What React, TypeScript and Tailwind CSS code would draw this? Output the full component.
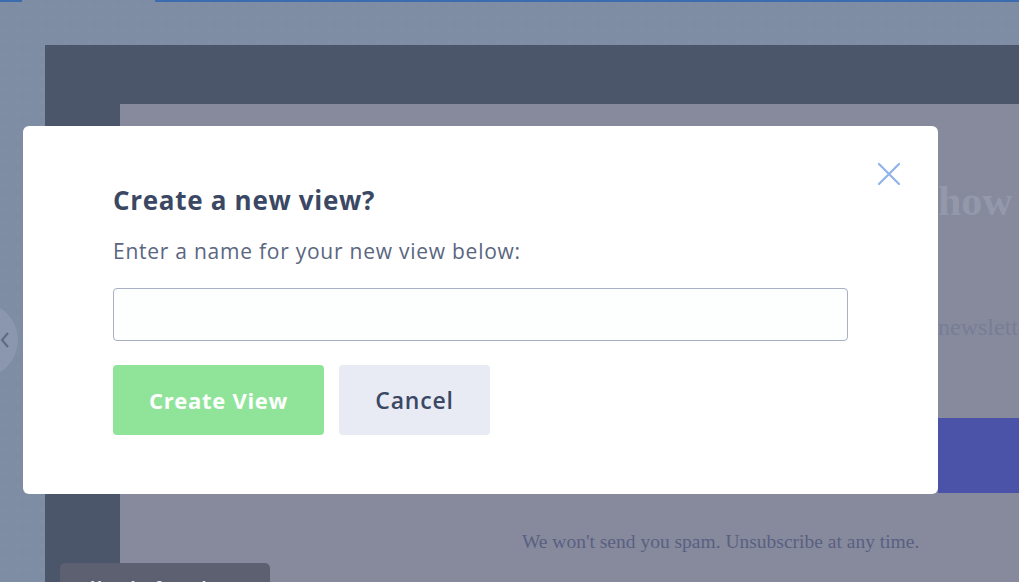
import React from "react";

const sans = { fontFamily: "'Open Sans', Lato, sans-serif" };

const CloseIcon = () => (
  <svg width="24" height="24" viewBox="0 0 24 24" fill="none">
    <path d="M2 2L22 22M22 2L2 22" stroke="#8fb3ea" strokeWidth="2.2" strokeLinecap="round" />
  </svg>
);

const Backdrop = () => (
  <div className="w-[1019px] h-[582px] flex flex-col bg-[#7e8ca4] bg-[radial-gradient(#8391a8_1px,transparent_1px)] bg-[size:12px_12px]">
    <div className="flex h-[2px] shrink-0">
      <div className="w-[22px] bg-[#3d6cae]" />
      <div className="w-[133px] bg-[#7e8ca4]" />
      <div className="flex-1 bg-[#3d6cae]" />
    </div>
    <div className="flex-1 flex flex-col pl-[45px] pt-[43px]">
      <div className="flex-1 flex flex-col bg-[#4b566b] pl-[75px] pt-[59px]">
        <div
          className="flex-1 flex flex-col bg-[#868a9c] text-[#9398ab]"
          style={{ fontFamily: "'Liberation Serif', serif" }}
        >
          <div className="ml-[818px] mt-[75px] text-[42px] leading-[44px] font-bold whitespace-nowrap">how to</div>
          <div className="ml-[818px] mt-[90px] text-[24px] leading-[28px] text-[#787d97] whitespace-nowrap">newsletter</div>
          <div className="ml-[818px] mt-[77px] h-[75px] bg-[#4a53a7]" />
          <div className="ml-[402px] mt-[37px] text-[19.5px] leading-[24px] text-[#5a5f82] whitespace-nowrap">
            We won't send you spam. Unsubscribe at any time.
          </div>
        </div>
      </div>
    </div>
  </div>
);

export default function App() {
  return (
    <div className="relative w-[1019px] h-[582px] overflow-hidden" style={sans}>
      <Backdrop />

      {/* carousel arrow */}
      <div className="absolute left-[-58px] top-[302px] w-[76px] h-[76px] rounded-full bg-[#8a97ae] flex items-center justify-end pr-[8px]">
        <svg width="10" height="16" viewBox="0 0 10 16" fill="none">
          <path d="M8 1L2 8L8 15" stroke="#5d6a85" strokeWidth="2" />
        </svg>
      </div>

      {/* bottom tag */}
      <div className="absolute left-[60px] top-[563px] w-[210px] h-[30px] rounded-t-[5px] bg-[#5d6070] px-[30px] pt-[12px] text-[16px] font-bold text-[#e5e7ee] whitespace-nowrap">
        Use the free plan
      </div>

      {/* modal */}
      <div className="absolute left-[23px] top-[126px] w-[915px] h-[368px] bg-white rounded-[6px] flex flex-col pl-[90px] pr-[90px] pt-[56px]">
        <button className="absolute right-[37px] top-[36px]">
          <CloseIcon />
        </button>
        <h2 className="text-[26px] leading-[36px] font-bold tracking-[0.7px] text-[#3b4863]">Create a new view?</h2>
        <p className="mt-[19px] text-[21px] leading-[28px] tracking-[0.75px] text-[#5a6680]">
          Enter a name for your new view below:
        </p>
        <input className="mt-[23px] w-[735px] h-[53px] rounded-[4px] border border-[#a9b0c4] bg-[#fdfefe] outline-none" />
        <div className="mt-[24px] flex gap-[15px]">
          <button className="w-[211px] h-[70px] rounded-[4px] bg-[#90e49a] text-white text-[22px] font-bold tracking-[0.7px]">
            Create View
          </button>
          <button className="w-[151px] h-[70px] rounded-[4px] bg-[#e8ebf4] text-[#3b4863] text-[23px] font-semibold tracking-[0.8px]">
            Cancel
          </button>
        </div>
      </div>
    </div>
  );
}
